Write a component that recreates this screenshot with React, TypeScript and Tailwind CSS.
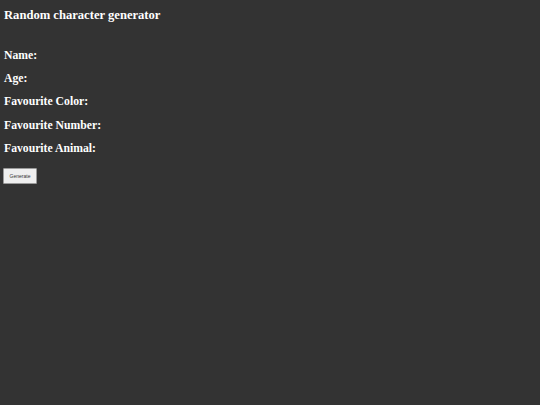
export default function App() {
  return (
    <div className="min-h-[405px] w-full bg-[#333333] text-white px-[4px] pt-[1px]" style={{ fontFamily: '"Liberation Serif", serif' }}>
      <h1 className="text-[12.6px] font-bold leading-[15px] mt-[7px]">Random character generator</h1>
      <div className="mt-[26px] flex flex-col gap-[9.2px]">
        <h3 className="text-[11.7px] font-bold leading-[14px]">Name:</h3>
        <h3 className="text-[11.7px] font-bold leading-[14px]">Age:</h3>
        <h3 className="text-[11.7px] font-bold leading-[14px]">Favourite Color:</h3>
        <h3 className="text-[11.7px] font-bold leading-[14px]">Favourite Number:</h3>
        <h3 className="text-[11.7px] font-bold leading-[14px]">Favourite Animal:</h3>
      </div>
      <div className="mt-[12px] -ml-[1px] flex">
        <button className="w-[34px] min-h-[16px] h-[16px] bg-[#efefef] border border-[#9a9a9a] rounded-[1px] text-[#333333] text-[5px] leading-[6px] flex items-center justify-center" style={{ fontFamily: '"Liberation Sans", sans-serif' }}>
          Generate
        </button>
      </div>
    </div>
  );
}
